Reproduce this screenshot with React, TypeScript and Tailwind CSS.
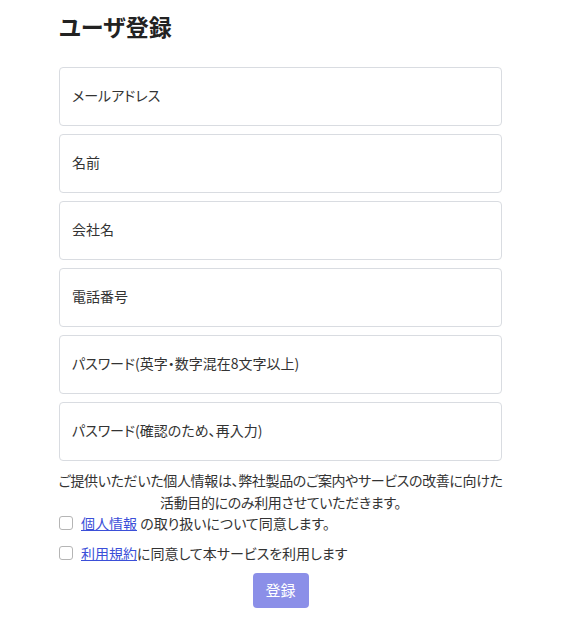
import { useState } from "react"

const fields = [
  { name: "email", type: "email", placeholder: "メールアドレス" },
  { name: "name", type: "text", placeholder: "名前" },
  { name: "company", type: "text", placeholder: "会社名" },
  { name: "tel", type: "tel", placeholder: "電話番号" },
  { name: "password", type: "password", placeholder: "パスワード(英字・数字混在8文字以上)" },
  { name: "password2", type: "password", placeholder: "パスワード(確認のため、再入力)" },
]

export default function App() {
  const [privacy, setPrivacy] = useState(false)
  const [terms, setTerms] = useState(false)

  return (
    <div className="min-h-[630px] bg-white text-[#333] [font-family:'Noto_Sans_CJK_JP',sans-serif] [font-feature-settings:'palt']">
      <div className="ml-[59px] w-[443px] pt-[8px]">
        <h1 className="text-[23px] font-semibold leading-[36px] text-[#222]">ユーザ登録</h1>

        <form className="mt-[23px] flex flex-col" onSubmit={(e) => e.preventDefault()}>
          <div className="flex flex-col gap-[8px]">
            {fields.map((f) => (
              <input key={f.name} name={f.name} type={f.type} placeholder={f.placeholder}
              className="h-[59px] w-full rounded-[4px] border border-[#d9dce1] bg-white px-[12px] pb-[3px] text-[14px] text-[#333] placeholder:text-[#333] outline-none [font-feature-settings:'palt']" />
            ))}
          </div>

          <p className="mt-[8px] -mx-[4px] whitespace-nowrap text-center text-[14px] leading-[22px] tracking-[-0.35px] text-[#333]">
            ご提供いただいた個人情報は、弊社製品のご案内やサービスの改善に向けた<br />
            活動目的にのみ利用させていただきます。
          </p>

          <label className="mt-[-1px] flex items-center gap-[8px] text-[14px] leading-[22px]">
            <input type="checkbox" checked={privacy} onChange={() => setPrivacy(!privacy)}
            className="h-[14px] w-[14px] appearance-none rounded-[3px] border border-[#b5b5b5] bg-white" />
            <span><a href="#" className="text-[#3b4fd8] underline">個人情報</a> の取り扱いについて同意します。</span>
          </label>

          <label className="mt-[8px] flex items-center gap-[8px] text-[14px] leading-[22px]">
            <input type="checkbox" checked={terms} onChange={() => setTerms(!terms)}
            className="h-[14px] w-[14px] appearance-none rounded-[3px] border border-[#b5b5b5] bg-white" />
            <span><a href="#" className="text-[#3b4fd8] underline">利用規約</a>に同意して本サービスを利用します</span>
          </label>

          <div className="mt-[9px] flex justify-center">
            <button type="submit" disabled={!privacy || !terms}
            className="h-[35px] w-[56px] rounded-[4px] bg-[#8b8fe8] text-[15px] text-white">
              登録
            </button>
          </div>
        </form>
      </div>
    </div>
  )
}
